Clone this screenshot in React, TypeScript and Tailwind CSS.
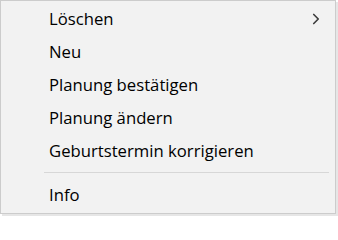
import { ChevronRight } from "lucide-react";

const items = [
  { label: "Löschen", submenu: true },
  { label: "Neu" },
  { label: "Planung bestätigen" },
  { label: "Planung ändern" },
  { label: "Geburtstermin korrigieren" },
];

function MenuRow({ label, submenu }: { label: string; submenu?: boolean }) {
  return (
    <div className="flex h-[33px] items-center justify-between pl-[48px] pr-[10px]">
      <span>{label}</span>
      {submenu ? <ChevronRight className="h-[18px] w-[18px] text-[#3c3c3c]" strokeWidth={2.2} /> : null}
    </div>
  );
}

export default function App() {
  return (
    <div className="h-[216px] w-[338px] bg-white">
      <div
        className="flex h-[214px] w-[336px] flex-col border border-[#cccccc] bg-[#f2f2f2] pt-[1px] text-[16.7px] text-black shadow-[2px_2px_0_#e6e6e6]"
        style={{ fontFamily: '"Open Sans", "Noto Sans", sans-serif' }}
      >
        {items.map((item) => (
          <MenuRow key={item.label} label={item.label} submenu={item.submenu} />
        ))}
        <div className="py-[5px] pl-[43px] pr-[6px]">
          <div className="h-px bg-[#d7d7d7]" />
        </div>
        <MenuRow label="Info" />
      </div>
    </div>
  );
}
